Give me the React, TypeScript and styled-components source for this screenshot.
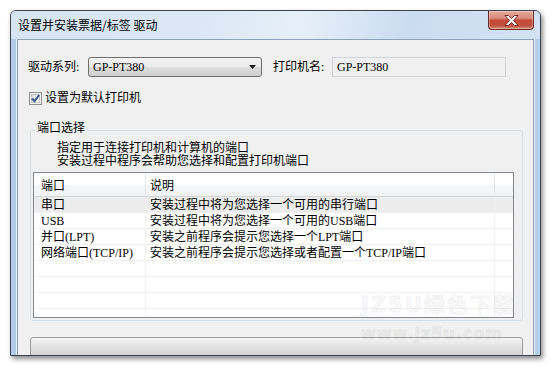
import * as React from 'react'
import styled, { createGlobalStyle } from 'styled-components'

const GlobalStyle = createGlobalStyle`
  html, body {
    margin: 0;
    padding: 0;
    background: #fff;
  }

  body {
    font-family: 'Liberation Serif', 'Noto Sans CJK SC', serif;
    font-size: 12px;
    color: #000;
  }
`

const Page = styled.div`
  width: 552px;
  height: 367px;
  padding: 10px 0 0 10px;
  box-sizing: border-box;
  overflow: hidden;
`

const Window = styled.div`
  position: relative;
  display: flex;
  flex-direction: column;
  width: 531px;
  height: 346px;
  box-sizing: border-box;
  border: 1px solid #3b434d;
  border-radius: 6px 6px 0 0;
  background: linear-gradient(to right, #b3cae6, #c8daef 50%, #b8cfe9);
  box-shadow: 2px 3px 5px rgba(0, 0, 0, 0.45);
  overflow: hidden;
`

const TitleBar = styled.div`
  display: flex;
  justify-content: space-between;
  align-items: flex-start;
  height: 28px;
  flex-shrink: 0;
  background: linear-gradient(100deg, #d6e4f4 0%, #dbe7f5 35%, #e6eff9 55%, #cadcf0 75%, #d4e3f3 100%);
`

const TitleText = styled.div`
  padding-left: 7px;
  font-family: 'Noto Sans CJK SC', sans-serif;
  font-size: 12px;
  line-height: 28px;
  color: #000;
`

const CloseButton = styled.div`
  display: flex;
  align-items: center;
  justify-content: center;
  width: 46px;
  height: 19px;
  margin-right: 6px;
  box-sizing: border-box;
  border: 1px solid #6e2b24;
  border-top: 0;
  border-radius: 0 0 4px 4px;
  background: linear-gradient(#e8ab9c 0%, #d98b7a 40%, #c44a36 52%, #c0523f 80%, #d88e78 100%);
  box-shadow: inset 0 0 0 1px rgba(255, 255, 255, 0.3);
`

const Frame = styled.div`
  display: flex;
  flex: 1;
  min-height: 0;
  padding: 0 6px;
`

const Client = styled.div`
  display: flex;
  flex-direction: column;
  flex: 1;
  background: #f0f0f0;
  border: 1px solid #8ea3bb;
  border-bottom: 0;
  box-shadow: -1px 0 0 #e4edf8, 1px 0 0 #e4edf8;
  overflow: hidden;
`

const TopRow = styled.div`
  display: flex;
  align-items: center;
  height: 20px;
  margin: 17px 0 0 10px;
`

const FieldLabel = styled.div<{ $w: number; $ml?: number }>`
  width: ${p => p.$w}px;
  margin-left: ${p => p.$ml || 0}px;
  line-height: 20px;
  white-space: nowrap;
`

const Select = styled.div`
  display: flex;
  align-items: center;
  justify-content: space-between;
  width: 174px;
  height: 20px;
  box-sizing: border-box;
  padding: 0 5px 0 4px;
  border: 1px solid #707070;
  border-radius: 3px;
  background: linear-gradient(#f3f3f3 0%, #ebebeb 48%, #dddddd 52%, #cfcfcf 100%);
  line-height: 18px;
`

const TextBox = styled.div`
  width: 174px;
  height: 20px;
  box-sizing: border-box;
  padding-left: 4px;
  border: 1px solid #d0d4d8;
  background: #f0f0f0;
  line-height: 18px;
`

const CheckRow = styled.div`
  display: flex;
  align-items: center;
  gap: 3px;
  height: 13px;
  margin: 15px 0 0 11px;
  line-height: 13px;
`

const GroupBox = styled.fieldset`
  min-width: 0;
  margin: 16px 10px 0 12px;
  padding: 3px 8px 2px 2px;
  border: 1px solid #d5dfe5;
  border-radius: 3px;
`

const Legend = styled.legend`
  margin-left: 2px;
  padding: 0 2px 4px;
  line-height: 14px;
`

const Description = styled.div`
  padding-left: 24px;
  line-height: 13px;
`

const ListView = styled.div`
  display: grid;
  grid-template-columns: 112px 349px 1fr;
  grid-template-rows: 24px;
  grid-auto-rows: 16px;
  height: 146px;
  margin-top: 4px;
  box-sizing: border-box;
  border: 1px solid #828790;
  background: #fff;
  overflow: hidden;
`

const HeaderCell = styled.div<{ $pad: number; $last?: boolean }>`
  padding: 4px 0 0 ${p => p.$pad}px;
  box-sizing: border-box;
  border-right: ${p => (p.$last ? '0' : '1px solid #e3e6ea')};
  border-bottom: 1px solid #d5d5d5;
  background: linear-gradient(#ffffff 0%, #ffffff 48%, #f6f7f8 52%, #f1f2f4 100%);
  line-height: 18px;
  white-space: nowrap;
`

const Cell = styled.div<{ $pad: number; $selected?: boolean; $last?: boolean }>`
  padding: 2px 0 0 ${p => p.$pad}px;
  box-sizing: border-box;
  border-right: ${p => (p.$last ? '0' : '1px solid #f0f0f0')};
  border-bottom: 1px solid #f0f0f0;
  background: ${p => (p.$selected ? '#ececec' : 'transparent')};
  line-height: 13px;
  white-space: nowrap;
  overflow: hidden;
`

const BottomBar = styled.div`
  flex-shrink: 0;
  height: 24px;
  margin: 16px 10px 0 12px;
  border: 1px solid #9c9c9c;
  border-radius: 3px 3px 0 0;
  background: linear-gradient(#f5f5f5 0%, #e2e2e2 35%, #cbcbcb 100%);
`

const Watermark = styled.div`
  position: absolute;
  left: 350px;
  top: 283px;
  display: flex;
  flex-direction: column;
  gap: 8px;
  font-family: 'DejaVu Sans', 'Noto Sans CJK SC', sans-serif;
  font-weight: 700;
  color: rgba(160, 160, 160, 0.08);
  -webkit-text-stroke: 1px rgba(170, 170, 170, 0.14);
  pointer-events: none;
`

const WatermarkLine = styled.div<{ $size: number; $spacing: number }>`
  font-size: ${p => p.$size}px;
  line-height: ${p => p.$size + 2}px;
  letter-spacing: ${p => p.$spacing}px;
  white-space: nowrap;
`

const ports = [
  { name: '串口', info: '安装过程中将为您选择一个可用的串行端口' },
  { name: 'USB', info: '安装过程中将为您选择一个可用的USB端口' },
  { name: '并口(LPT)', info: '安装之前程序会提示您选择一个LPT端口' },
  { name: '网络端口(TCP/IP)', info: '安装之前程序会提示您选择或者配置一个TCP/IP端口' },
]

const CloseIcon = () => (
  <svg width="15" height="11" viewBox="0 0 15 11">
    <polygon
      points="1,0.5 4.5,0.5 7.5,3.5 10.5,0.5 14,0.5 9.5,5.5 14,10.5 10.5,10.5 7.5,7.5 4.5,10.5 1,10.5 5.5,5.5"
      fill="#fff"
      stroke="#6b2a22"
      strokeWidth="1"
      strokeLinejoin="round"
    />
  </svg>
)

const DropArrow = () => (
  <svg width="7" height="4" viewBox="0 0 7 4">
    <polygon points="0,0 7,0 3.5,4" fill="#1b1b1b" />
  </svg>
)

const CheckBox = () => (
  <svg width="13" height="13" viewBox="0 0 13 13">
    <defs>
      <linearGradient id="cbg" x1="0" y1="0" x2="1" y2="1">
        <stop offset="0" stopColor="#dcdcdc" />
        <stop offset="1" stopColor="#fbfbfb" />
      </linearGradient>
    </defs>
    <rect x="0.5" y="0.5" width="12" height="12" fill="#f4f4f4" stroke="#8e8f8f" />
    <rect x="2.5" y="2.5" width="8" height="8" fill="url(#cbg)" stroke="#c4c6c8" />
    <path d="M3 6.5 L5.5 9.2 L10.2 3" fill="none" stroke="#3a5690" strokeWidth="2" />
  </svg>
)

export default function App() {
  const emptyRows = [0, 1, 2, 3]

  return (
    <Page>
      <GlobalStyle />
      <Window>
        <TitleBar>
          <TitleText>设置并安装票据/标签 驱动</TitleText>
          <CloseButton>
            <CloseIcon />
          </CloseButton>
        </TitleBar>

        <Frame>
          <Client>
            <TopRow>
              <FieldLabel $w={60}>驱动系列:</FieldLabel>
              <Select>
                <span>GP-PT380</span>
                <DropArrow />
              </Select>
              <FieldLabel $w={59} $ml={11}>打印机名:</FieldLabel>
              <TextBox>GP-PT380</TextBox>
            </TopRow>

            <CheckRow>
              <CheckBox />
              <span>设置为默认打印机</span>
            </CheckRow>

            <GroupBox>
              <Legend>端口选择</Legend>
              <Description>
                指定用于连接打印机和计算机的端口
                <br />
                安装过程中程序会帮助您选择和配置打印机端口
              </Description>

              <ListView>
                <HeaderCell $pad={7}>端口</HeaderCell>
                <HeaderCell $pad={4}>说明</HeaderCell>
                <HeaderCell $pad={0} $last />

                {ports.map((port, i) => (
                  <React.Fragment key={port.name}>
                    <Cell $pad={7} $selected={i === 0}>{port.name}</Cell>
                    <Cell $pad={4} $selected={i === 0}>{port.info}</Cell>
                    <Cell $pad={0} $selected={i === 0} $last />
                  </React.Fragment>
                ))}

                {emptyRows.map(row => (
                  <React.Fragment key={'empty-' + row}>
                    <Cell $pad={7} />
                    <Cell $pad={4} />
                    <Cell $pad={0} $last />
                  </React.Fragment>
                ))}
              </ListView>
            </GroupBox>

            <BottomBar />
          </Client>
        </Frame>

        <Watermark>
          <WatermarkLine $size={21} $spacing={2}>JZ5U绿色下载</WatermarkLine>
          <WatermarkLine $size={16} $spacing={1}>www.jz5u.com</WatermarkLine>
        </Watermark>
      </Window>
    </Page>
  )
}
